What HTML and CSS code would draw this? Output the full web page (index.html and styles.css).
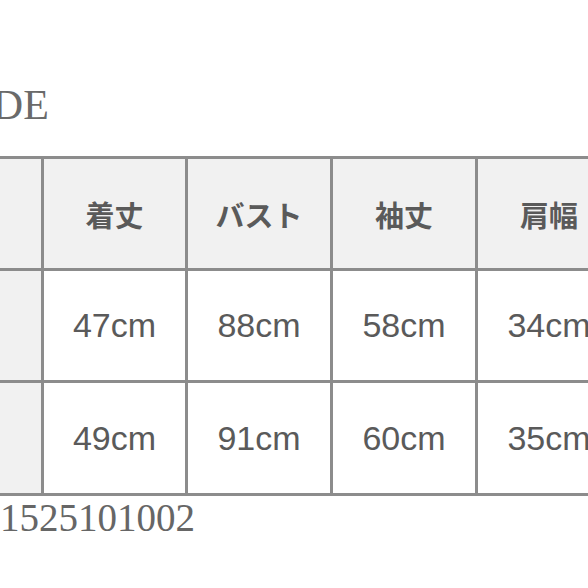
FILE: index.html
```html
<!DOCTYPE html>
<html lang="ja">
<head>
<meta charset="utf-8">
<link rel="stylesheet" href="styles.css">
</head>
<body>
<div class="page">
  <div class="title">SIZE GUIDE</div>
  <div class="grid">
    <div class="cell head label"></div>
    <div class="cell head">着丈</div>
    <div class="cell head">バスト</div>
    <div class="cell head">袖丈</div>
    <div class="cell head">肩幅</div>

    <div class="cell label"></div>
    <div class="cell">47cm</div>
    <div class="cell">88cm</div>
    <div class="cell">58cm</div>
    <div class="cell">34cm</div>

    <div class="cell label"></div>
    <div class="cell">49cm</div>
    <div class="cell">91cm</div>
    <div class="cell">60cm</div>
    <div class="cell">35cm</div>
  </div>
  <div class="code">1525101002</div>
</div>
</body>
</html>
```
FILE: styles.css
```css
html, body {
  margin: 0;
  padding: 0;
  background: #ffffff;
  overflow: hidden;
}
.page {
  width: 588px;
  height: 588px;
  overflow: hidden;
  padding-top: 81px;
  box-sizing: border-box;
}
.title {
  font-family: "Liberation Serif", serif;
  font-size: 42px;
  line-height: 48px;
  color: #6a6a6a;
  margin-left: -181px;
  white-space: nowrap;
}
.grid {
  margin-top: 27px;
  margin-left: -103px;
  width: max-content;
  display: grid;
  grid-template-columns: 141px 141px 142px 142px 142px;
  grid-template-rows: 109px 109px 110px;
  gap: 3px;
  padding: 3px;
  background: #8c8c8c;
}
.cell {
  background: #ffffff;
  display: flex;
  align-items: center;
  justify-content: center;
  font-family: "Liberation Sans", Arial, sans-serif;
  font-size: 34px;
  color: #5a5a5a;
  white-space: nowrap;
}
.cell.head {
  background: #f1f1f1;
  font-family: "Noto Sans CJK JP", sans-serif;
  font-weight: 700;
  font-size: 29px;
  color: #5a5a5a;
}
.cell.label {
  background: #f1f1f1;
}
.code {
  font-family: "Liberation Serif", serif;
  font-size: 39px;
  line-height: 44px;
  color: #666666;
}
```
